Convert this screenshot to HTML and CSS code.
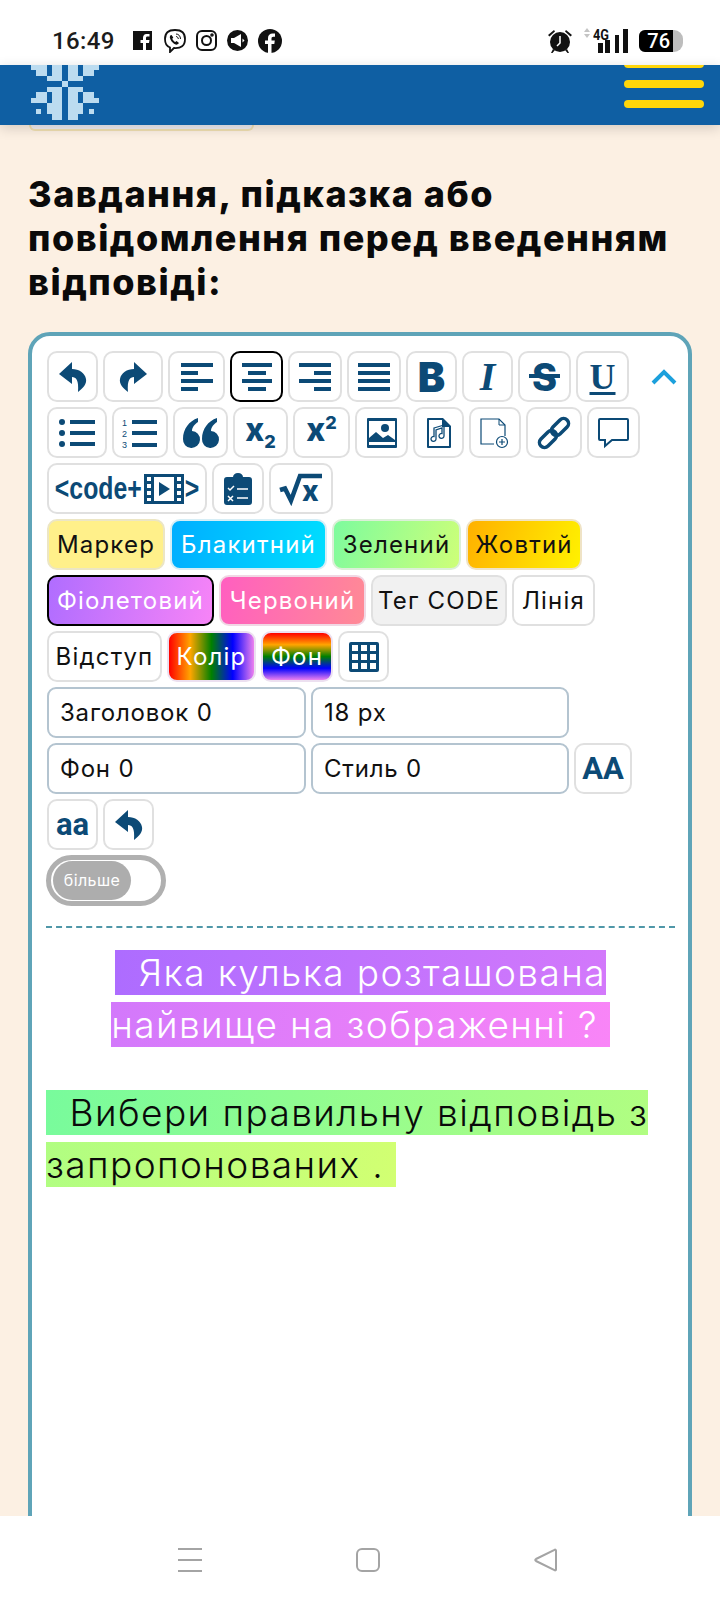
FILE: index.html
```html
<!DOCTYPE html>
<html lang="uk">
<head>
    <meta charset="UTF-8">
    <meta name="viewport" content="width=device-width, initial-scale=1.0">
    <title>Завдання</title>
    <link rel="stylesheet" href="styles.css">
</head>
<body>
    <div class="status-bar">
        <span class="time">16:49</span>
        <svg class="st-fb" viewBox="0 0 19 19"><path d="M0 0h19v19H13v-7h3l.5-3H13V7c0-1 .5-1.500 1.500-1.500H16.500V3h-3C11 3 10 5 10 7v2H7.500v3H10v7H0z"/></svg>
        <svg class="st-viber line" viewBox="0 0 24 24" stroke="#111" stroke-width="1.800"><path d="M12 1C5 1 2 4 2 10c0 5 2 7.500 5 8.500V23l4-4c7 .5 11-2 11-9 0-6-3-9-10-9z"/><path class="solid" d="M8 6c-1.500 1-1.500 2.500-.5 4.500 1 2.500 3 4 5 5 1.500.5 3-.5 3.500-1.500l-2.500-2-1.200 1c-1.500-.8-2.500-2-3-3.300l1-1.200L8.500 6z" stroke="none"/><path d="M13 5c2.500 0 4.500 2 4.500 5M13 7.500c1.200 0 2.300 1 2.300 2.500" stroke-width="1"/></svg>
        <svg class="st-insta line" viewBox="0 0 21 21" stroke="#111" stroke-width="2"><rect x="1" y="1" width="19" height="19" rx="5"/><circle cx="10.500" cy="10.500" r="4.500"/><circle cx="16" cy="5" r=".8"/></svg>
        <svg class="st-horn" viewBox="0 0 21 21"><circle cx="10.500" cy="10.500" r="10.500"/><path class="st-white" d="M4 8h3l7-4v13l-7-4H4zM15.500 8.500l2 2-2 2z"/></svg>
        <svg class="st-face" viewBox="0 0 24 24"><circle cx="12" cy="12" r="12"/><path class="st-white" d="M10 24v-9H7v-3.500h3V9c0-3 2-4.500 4.500-4.500H17v3.200h-1.700c-1.300 0-1.800.8-1.800 1.800v2h3.300l-.5 3.500h-2.800v9z"/></svg>
        <span class="status-right">
            <svg class="st-alarm" viewBox="0 0 26 26"><circle cx="13" cy="14" r="10"/><path d="M1 7l6-5 1 1.500-5.500 5zM25 7l-6-5-1 1.500 5.500 5zM6 21l-2 4h1.500l2.500-3zM20 21l2 4h-1.500L18 22z"/><path class="st-hands" d="M13 8v7l-3 3"/></svg>
            <svg class="st-arrows" viewBox="0 0 6 10"><path class="st-grey" d="M3 0l3 4H0zM3 10l3-4H0z"/></svg>
            <span class="signal">
                <span class="net">4G</span>
                <svg class="st-bars" viewBox="0 0 30 24"><path d="M0 14h5v10H0zM7 11h5v13H7zM17 6h4v18h-4zM25 0h5v24h-5z"/></svg>
            </span>
            <span class="battery"><span class="battery-fill">76</span></span>
        </span>
    </div>

    <header class="site-header">
        <svg class="logo" viewBox="0 0 13 13" preserveAspectRatio="none" shape-rendering="crispEdges"><path d="M0 3h3v1H0zM4 3h2v1H4zM7 3h2v1H7zM10 3h3v1h-3zM1 4h2v1H1zM4 4h2v1H4zM7 4h2v1H7zM10 4h2v1h-2zM3 5h3v1H3zM7 5h3v1H7zM6 6h1v1H6zM3 7h3v1H3zM7 7h3v1H7zM1 8h2v1H1zM4 8h2v1H4zM7 8h2v1H7zM10 8h2v1h-2zM0 9h3v1H0zM4 9h2v1H4zM7 9h2v1H7zM10 9h3v1h-3zM3 10h3v1H3zM7 10h3v1H7zM1 11h1v1H1zM3 11h3v1H3zM7 11h3v1H7zM11 11h1v1h-1zM4 12h2v1H4zM7 12h2v1H7z" fill="#bcdcf0"/></svg>
        <div class="burger"><span></span><span></span><span></span></div>
    </header>

    <main class="content">
        <div class="peek"></div>
        <h2 class="title">Завдання, підказка або<br>повідомлення перед введенням<br>відповіді:</h2>

        <section class="card">
            <div class="toolbar">
                <div class="row">
                    <button class="btn w51"><svg class="ico" width="28" height="30" viewBox="0 0 28 30"><path d="M13 0L0 12l13 10v-7c4 0 7 3 6 15 5-4 9-8 8-13C26 11 20 7 13 7z"/></svg></button>
                    <button class="btn w60"><svg class="ico flip" width="28" height="30" viewBox="0 0 28 30"><path d="M13 0L0 12l13 10v-7c4 0 7 3 6 15 5-4 9-8 8-13C26 11 20 7 13 7z"/></svg></button>
                    <button class="btn w57"><svg class="ico" width="32" height="28" viewBox="0 0 32 28"><path d="M0 0h32v4H0zM0 8h17v4H0zM0 16h32v4H0zM0 24h17v4H0z"/></svg></button>
                    <button class="btn w53 active"><svg class="ico" width="30" height="28" viewBox="0 0 30 28"><path d="M0 0h30v4H0zM6 8h18v4H6zM0 16h30v4H0zM6 24h18v4H6z"/></svg></button>
                    <button class="btn w54"><svg class="ico" width="32" height="28" viewBox="0 0 32 28"><path d="M0 0h32v4H0zM15 8h17v4H15zM0 16h32v4H0zM15 24h17v4H15z"/></svg></button>
                    <button class="btn w54"><svg class="ico" width="32" height="28" viewBox="0 0 32 28"><path d="M0 0h32v4H0zM0 8h32v4H0zM0 16h32v4H0zM0 24h32v4H0z"/></svg></button>
                    <button class="btn w51 glyph glyph-b">B</button>
                    <button class="btn w51 glyph glyph-i">I</button>
                    <button class="btn w53 glyph glyph-s">S</button>
                    <button class="btn w53 glyph glyph-u">U</button>
                    <svg class="chevron" width="26" height="16" viewBox="0 0 26 16" fill="none" stroke="#1ca0dc" stroke-width="4"><path d="M2 14L13 3l11 11"/></svg>
                </div>
                <div class="row">
                    <button class="btn w60"><svg class="ico" width="36" height="28" viewBox="0 0 36 28"><circle cx="3" cy="3" r="3"/><circle cx="3" cy="14" r="3"/><circle cx="3" cy="25" r="3"/><path d="M11 1h25v4H11zM11 12h25v4H11zM11 23h25v4H11z"/></svg></button>
                    <button class="btn w56"><svg class="ico" width="36" height="32" viewBox="0 0 36 32"><text x="0" y="9" class="ol-num">1</text><text x="0" y="20" class="ol-num">2</text><text x="0" y="31" class="ol-num">3</text><path d="M10 3h25v4H10zM10 14h25v4H10zM10 26h25v4H10z"/></svg></button>
                    <button class="btn w55"><svg class="ico" width="35" height="30" viewBox="0 0 35 30"><path d="M15 0C6 3 0 11 0 21a8.500 8.500 0 1 0 9-8c0-4 3-7 6-9zM34 0c-9 3-15 11-15 21a8.500 8.500 0 1 0 9-8c0-4 3-7 6-9z"/></svg></button>
                    <button class="btn w55 glyph glyph-x"><span>x<sub>2</sub></span></button>
                    <button class="btn w57 glyph glyph-x"><span>x<sup>2</sup></span></button>
                    <button class="btn w53"><svg class="ico" width="30" height="30" viewBox="0 0 30 30"><path d="M1 0h28a1 1 0 0 1 1 1v28a1 1 0 0 1-1 1H1a1 1 0 0 1-1-1V1a1 1 0 0 1 1-1zM2 3v17l7-6 7 6 5-3 7 5V3zM2 24v3h26v-3z" fill-rule="evenodd"/><circle cx="18" cy="10" r="4"/></svg></button>
                    <button class="btn w51"><svg class="ico" width="24" height="30" viewBox="0 0 24 30"><path d="M1 0h15l8 8v21a1 1 0 0 1-1 1H1a1 1 0 0 1-1-1V1a1 1 0 0 1 1-1zM2 2v26h20V9h-7V2z" fill-rule="evenodd"/><path class="ico-line" d="M7 10l10-3v11a2.500 2.500 0 1 1-2-2.500V10l-6 2v9a2.500 2.500 0 1 1-2-2.500z" stroke-width="1.300"/></svg></button>
                    <button class="btn w52"><svg class="ico ico-line" width="30" height="30" viewBox="0 0 30 30" stroke-width="1.200"><path d="M14 26H1V1h18l6 6v11"/><path d="M19 1v6h6" stroke-width="1"/><circle cx="22" cy="24" r="5.500"/><path d="M22 21v6M19 24h6"/></svg></button>
                    <button class="btn w56"><svg class="ico ico-line" width="32" height="32" viewBox="0 0 32 32" stroke-width="3.500"><rect x="0" y="17" width="20" height="10" rx="5" transform="rotate(-45 10 22)"/><rect x="12" y="5" width="20" height="10" rx="5" transform="rotate(-45 22 10)"/></svg></button>
                    <button class="btn w53"><svg class="ico ico-line" width="31" height="29" viewBox="0 0 31 29" stroke-width="2"><path d="M2 1h27a1 1 0 0 1 1 1v19a1 1 0 0 1-1 1H14l-7 6v-6H2a1 1 0 0 1-1-1V2a1 1 0 0 1 1-1z"/></svg></button>
                </div>
                <div class="row">
                    <button class="btn w160 code-btn"><span class="code-text">&lt;code+</span><svg class="ico" width="40" height="30" viewBox="0 0 40 30"><path d="M0 0h40v30H0zM3 3v4h4V3zM3 10v4h4v-4zM3 17v4h4v-4zM3 24v3h4v-3zM33 3v4h4V3zM33 10v4h4v-4zM33 17v4h4v-4zM33 24v3h4v-3zM10 3v24h20V3z" fill-rule="evenodd"/><path d="M15 8l11 7-11 7z"/></svg><span class="code-text">&gt;</span></button>
                    <button class="btn w52"><svg class="ico" width="28" height="32" viewBox="0 0 28 32"><path d="M3 4h6c0-2 2-4 5-4s5 2 5 4h6a3 3 0 0 1 3 3v22a3 3 0 0 1-3 3H3a3 3 0 0 1-3-3V7a3 3 0 0 1 3-3z"/><path class="ico-white" d="M4 15l2 2 4-4M4 23l5 5M9 23l-5 5M13 16h11M13 25h11" stroke-width="1.500"/></svg></button>
                    <button class="btn w64"><svg class="ico" width="42" height="31" viewBox="0 0 42 31"><path class="ico-line" d="M0 17l5-1.500 6 12L20 3h22" stroke-width="4.500"/><text x="22" y="28" class="root-x">x</text></svg></button>
                </div>
                <div class="row">
                    <button class="btn tag w118 marker">Маркер</button>
                    <button class="btn tag w157 blue">Блакитний</button>
                    <button class="btn tag w129 green">Зелений</button>
                    <button class="btn tag w116 yellow">Жовтий</button>
                </div>
                <div class="row">
                    <button class="btn tag w167 violet active">Фіолетовий</button>
                    <button class="btn tag w147 red">Червоний</button>
                    <button class="btn tag w136 code-tag">Тег CODE</button>
                    <button class="btn tag w83">Лінія</button>
                </div>
                <div class="row">
                    <button class="btn tag w115">Відступ</button>
                    <button class="btn tag w89 rainbow-h">Колір</button>
                    <button class="btn tag w72 rainbow-v">Фон</button>
                    <button class="btn w51"><svg class="ico" width="30" height="30" viewBox="0 0 30 30"><path d="M2 0h26a2 2 0 0 1 2 2v26a2 2 0 0 1-2 2H2a2 2 0 0 1-2-2V2a2 2 0 0 1 2-2zM3 3v6h6V3zM12 3v6h6V3zM21 3v6h6V3zM3 12v6h6v-6zM12 12v6h6v-6zM21 12v6h6v-6zM3 21v6h6v-6zM12 21v6h6v-6zM21 21v6h6v-6z" fill-rule="evenodd"/></svg></button>
                </div>
                <div class="row">
                    <div class="select w259">Заголовок 0</div>
                    <div class="select w258">18 px</div>
                </div>
                <div class="row">
                    <div class="select w259">Фон 0</div>
                    <div class="select w258">Стиль 0</div>
                    <button class="btn w58 glyph glyph-aa">AA</button>
                </div>
                <div class="row">
                    <button class="btn w51 glyph glyph-aa">aa</button>
                    <button class="btn w51"><svg class="ico" width="28" height="30" viewBox="0 0 28 30"><path d="M13 0L0 12l13 10v-7c4 0 7 3 6 15 5-4 9-8 8-13C26 11 20 7 13 7z"/></svg></button>
                </div>
                <div class="row">
                    <div class="toggle"><span class="toggle-knob">більше</span></div>
                </div>
            </div>

            <div class="editor">
                <p class="line-center"><span class="mark-violet">&nbsp; Яка кулька розташована<br>найвище на зображенні ?&nbsp;</span></p>
                <p><span class="mark-green">&nbsp; Вибери правильну відповідь з<br>запропонованих .&nbsp;</span></p>
            </div>
        </section>
    </main>

    <nav class="nav-bar">
        <svg width="24" height="24" viewBox="0 0 24 24" fill="#a4a4a4"><path d="M0 0h24v2H0zM0 11h24v2H0zM0 22h24v2H0z"/></svg>
        <svg width="24" height="24" viewBox="0 0 24 24" fill="none" stroke="#a4a4a4" stroke-width="2"><rect x="1" y="1" width="22" height="22" rx="5"/></svg>
        <svg width="24" height="24" viewBox="0 0 24 24" fill="none" stroke="#a4a4a4" stroke-width="2"><path d="M22 2.500v19c0 1-1 1-1.500.7L2 13c-1-.6-1-1.400 0-2L20.500 1.800c.5-.3 1.500-.3 1.500.7z"/></svg>
    </nav>
</body>
</html>
```

FILE: styles.css
```css
* {
    margin: 0;
    padding: 0;
    box-sizing: border-box;
    font-family: 'Inter', 'Noto Sans', sans-serif;
}

html, body {
    height: 1604px;
    overflow: hidden;
}

body {
    display: flex;
    flex-direction: column;
    background-color: #fcf0e3;
    color: #111;
}

/* Status bar */
.status-bar {
    height: 65px;
    flex: none;
    background: white;
    display: flex;
    align-items: center;
    padding: 16px 0 0 52px;
}

.time {
    font-family: 'Roboto', sans-serif;
    font-size: 24px;
    font-weight: 500;
    letter-spacing: .4px;
    width: 81px;
    color: #1c1c1c;
}

.status-bar svg {
    flex: none;
    fill: #111;
}

.status-bar svg.line { fill: none; }
.status-bar svg .solid { fill: #111; }
.status-bar svg .st-white { fill: #fff; }
.status-bar svg .st-grey { fill: #c4c4c4; }
.status-bar svg .st-hands { fill: none; stroke: #fff; stroke-width: 1.5; }

.st-fb { width: 19px; height: 19px; }
.st-viber { width: 24px; height: 24px; margin-left: 11px; }
.st-insta { width: 21px; height: 21px; margin-left: 9px; }
.st-horn { width: 21px; height: 21px; margin-left: 10px; }
.st-face { width: 24px; height: 24px; margin-left: 10px; }

.status-right {
    margin-left: auto;
    padding-right: 37px;
    display: flex;
    align-items: center;
}

.st-alarm { width: 26px; height: 26px; }
.st-arrows { width: 6px; height: 10px; margin: -16px 0 0 11px; }

.signal {
    position: relative;
    width: 38px;
    height: 24px;
    display: block;
}

.net {
    position: absolute;
    top: -3px;
    left: 3px;
    font-family: 'Roboto', sans-serif;
    font-size: 15px;
    font-weight: 700;
    transform: scaleX(.85);
    transform-origin: left;
}

.st-bars {
    position: absolute;
    right: 0;
    top: 0;
    width: 30px;
    height: 24px;
}

.battery {
    width: 44px;
    height: 22px;
    margin-left: 11px;
    background: #bdbdbd;
    border-radius: 6px 9px 9px 6px;
    overflow: hidden;
    display: block;
}

.battery-fill {
    display: block;
    width: 34px;
    height: 22px;
    background: black;
    color: white;
    font-family: 'Roboto', sans-serif;
    font-size: 20px;
    font-weight: 500;
    line-height: 22px;
    text-align: right;
    padding-right: 3px;
}

/* Header */
.site-header {
    height: 60px;
    flex: none;
    background-color: #0f5fa3;
    display: flex;
    justify-content: space-between;
    padding: 0 16px 0 31px;
    overflow: hidden;
    position: relative;
    z-index: 2;
    box-shadow: 0 3px 12px rgba(0, 0, 0, 0.16);
}

.logo {
    width: 68px;
    height: 72px;
    margin-top: -17px;
    flex: none;
}

.burger {
    width: 80px;
    margin-top: -5px;
    display: flex;
    flex-direction: column;
    gap: 12px;
}

.burger span {
    height: 8px;
    background-color: #ffd60a;
    border-radius: 4px;
}

.content {
    flex: 1;
    min-height: 0;
    overflow: hidden;
    padding: 0 28px;
}

.peek {
    width: 225px;
    height: 6px;
    margin: 0 0 41px 1px;
    background-color: #eeecf0;
    border: 2px solid #f0dfb0;
    border-top: none;
    border-radius: 0 0 8px 8px;
}

.title {
    font-size: 36px;
    font-weight: 800;
    line-height: 44px;
    letter-spacing: 1.5px;
    color: #0a0a0a;
    margin-bottom: 28px;
    white-space: nowrap;
}

/* Card */
.card {
    background: white;
    border: 4px solid #5fa4b8;
    border-radius: 22px;
    padding: 15px 14px 0;
    height: 1300px;
}

.toolbar {
    display: flex;
    flex-direction: column;
    gap: 5px;
    padding-left: 1px;
}

.row {
    display: flex;
    gap: 5px;
    height: 51px;
    align-items: center;
}

.btn {
    height: 51px;
    flex: none;
    background: white;
    border: 2px solid #e0e0e0;
    border-radius: 10px;
    display: flex;
    align-items: center;
    justify-content: center;
    color: #0c4a76;
}

.btn.active {
    border: 2px solid #000;
}

.ico { fill: #0c4a76; flex: none; overflow: visible; }
.flip { transform: scaleX(-1); }
.ico-line { fill: none; stroke: #0c4a76; }
.ico-white { fill: none; stroke: #fff; }

.w51 { width: 51px; }
.w52 { width: 52px; }
.w53 { width: 53px; }
.w54 { width: 54px; }
.w55 { width: 55px; }
.w56 { width: 56px; }
.w57 { width: 57px; }
.w58 { width: 58px; }
.w60 { width: 60px; }
.w64 { width: 64px; }
.w72 { width: 72px; }
.w83 { width: 83px; }
.w89 { width: 89px; }
.w115 { width: 115px; }
.w116 { width: 116px; }
.w118 { width: 118px; }
.w129 { width: 129px; }
.w136 { width: 136px; }
.w147 { width: 147px; }
.w157 { width: 157px; }
.w160 { width: 160px; }
.w167 { width: 167px; }
.w258 { width: 258px; }
.w259 { width: 259px; }

.chevron { margin-left: 17px; flex: none; }

.ol-num {
    font-family: 'Liberation Sans', sans-serif;
    font-size: 9px;
}

.root-x {
    font-family: 'Inter', sans-serif;
    font-size: 28px;
    font-weight: 800;
}

/* Letters used as icons */
.glyph { font-weight: 800; color: #0c4a76; }
.glyph-b { font-size: 41px; font-weight: 900; }
.glyph-i { font-family: 'Liberation Serif', serif; font-size: 40px; font-style: italic; font-weight: 700; }

.glyph-s {
    font-size: 38px;
    font-weight: 800;
    position: relative;
}

.glyph-s::after {
    content: '';
    position: absolute;
    left: 9px;
    right: 9px;
    top: 21px;
    height: 4px;
    background-color: #0c4a76;
}

.glyph-u {
    font-family: 'Liberation Serif', serif;
    font-size: 36px;
    font-weight: 700;
    text-decoration: underline;
    text-decoration-thickness: 3px;
    text-underline-offset: 3px;
}

.glyph-x { font-size: 32px; font-weight: 800; padding-bottom: 6px; }
.glyph-x span { font: inherit; line-height: 1; }
.glyph-x sub, .glyph-x sup { font-size: 18px; font-weight: 800; line-height: 0; }
.glyph-aa { font-family: 'Roboto', sans-serif; font-size: 31px; font-weight: 700; }

.code-btn { gap: 0; }

.code-text {
    font-family: 'Liberation Sans', sans-serif;
    font-size: 31px;
    font-weight: 700;
    display: inline-block;
    transform: scaleX(.8);
    margin: 0 -9px;
}

.code-text:last-child { margin: 0 0 0 -1px; }

/* Text buttons */
.tag {
    font-size: 24px;
    font-weight: 400;
    letter-spacing: 1.2px;
    color: #111;
    white-space: nowrap;
}

.marker { background: #fff08a; border-color: #ece6c4; }
.blue { background: linear-gradient(100deg, #00aeff, #00deff); border-color: #d6eef6; color: white; }
.green { background: linear-gradient(110deg, #7dfb9e, #ceff78); border-color: #dcefd8; }
.yellow { background: linear-gradient(110deg, #ffb000, #fff200); border-color: #efe3c6; }
.violet { background: linear-gradient(100deg, #b06dff, #f784f7); color: white; }
.red { background: linear-gradient(100deg, #ff5fc0, #ff8a95); border-color: #f0d8e4; color: white; }
.code-tag { background: #f1f1f1; }
.rainbow-h { background: linear-gradient(to right, #ff0000, #ffa500, #008000, #0000ff, #ee82ee); border-color: #ece0f0; color: white; }
.rainbow-v { background: linear-gradient(to bottom, #ff0000, #ffa500, #008000, #0000ff, #ee82ee); border-color: #ece0f0; color: white; }

.select {
    height: 51px;
    flex: none;
    border: 2px solid #b4c4d0;
    border-radius: 9px;
    font-size: 24px;
    letter-spacing: .8px;
    line-height: 47px;
    padding-left: 11px;
    background: white;
}

.toggle {
    width: 120px;
    height: 51px;
    margin-left: -1px;
    border: 5px solid #b0b0b0;
    border-radius: 26px;
    padding: 1px 2px;
    background: white;
}

.toggle-knob {
    display: block;
    width: 78px;
    height: 39px;
    border-radius: 20px;
    background-color: #adadad;
    color: white;
    font-size: 16px;
    letter-spacing: .4px;
    line-height: 39px;
    text-align: center;
}

/* Editor area */
.editor {
    margin-top: 20px;
    border-top: 2px dashed #4f97a8;
    padding-top: 19px;
    width: 629px;
    font-size: 37px;
    letter-spacing: 1.4px;
    line-height: 52px;
    font-weight: 300;
}

.editor p { margin-bottom: 36px; }
.line-center { text-align: center; }

.mark-violet {
    background: linear-gradient(100deg, #ad6cff, #f985f7);
    color: white;
}

.mark-green {
    background: linear-gradient(100deg, #78fb9c, #d2ff72);
    color: #0a0a0a;
}

/* Android nav */
.nav-bar {
    height: 88px;
    flex: none;
    background: white;
    position: relative;
    z-index: 2;
    display: flex;
    gap: 154px;
    padding: 32px 0 0 178px;
}
```
